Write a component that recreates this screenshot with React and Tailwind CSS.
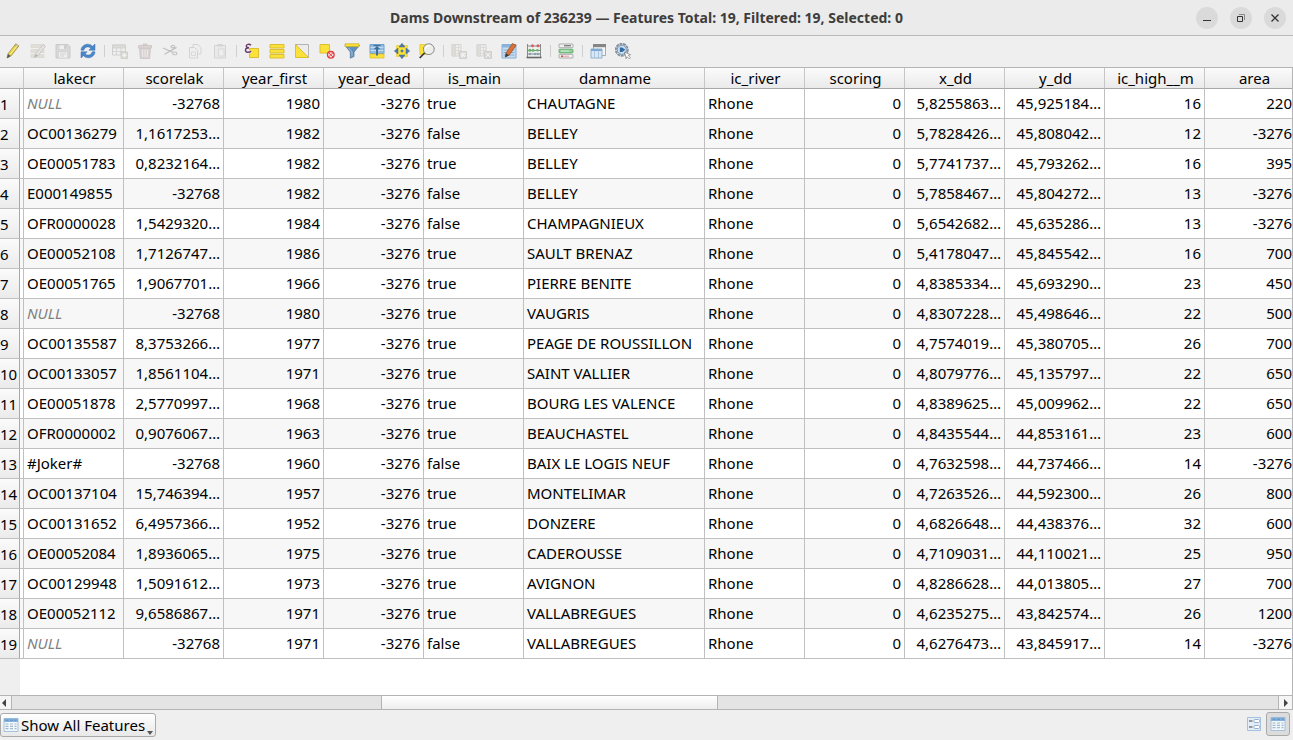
import React from 'react';

const COLUMNS = [
  { name: 'lakecr', align: 'left' },
  { name: 'scorelak', align: 'right' },
  { name: 'year_first', align: 'right' },
  { name: 'year_dead', align: 'right' },
  { name: 'is_main', align: 'left' },
  { name: 'damname', align: 'left', wide: true },
  { name: 'ic_river', align: 'left' },
  { name: 'scoring', align: 'right' },
  { name: 'x_dd', align: 'right' },
  { name: 'y_dd', align: 'right' },
  { name: 'ic_high__m', align: 'right' },
  { name: 'area', align: 'right', last: true },
];

const ROWS = [
  ['NULL', '-32768', '1980', 'true', 'CHAUTAGNE', '5,8255863…', '45,925184…', '16', '220'],
  ['OC00136279', '1,1617253…', '1982', 'false', 'BELLEY', '5,7828426…', '45,808042…', '12', '-3276'],
  ['OE00051783', '0,8232164…', '1982', 'true', 'BELLEY', '5,7741737…', '45,793262…', '16', '395'],
  ['E000149855', '-32768', '1982', 'false', 'BELLEY', '5,7858467…', '45,804272…', '13', '-3276'],
  ['OFR0000028', '1,5429320…', '1984', 'false', 'CHAMPAGNIEUX', '5,6542682…', '45,635286…', '13', '-3276'],
  ['OE00052108', '1,7126747…', '1986', 'true', 'SAULT BRENAZ', '5,4178047…', '45,845542…', '16', '700'],
  ['OE00051765', '1,9067701…', '1966', 'true', 'PIERRE BENITE', '4,8385334…', '45,693290…', '23', '450'],
  ['NULL', '-32768', '1980', 'true', 'VAUGRIS', '4,8307228…', '45,498646…', '22', '500'],
  ['OC00135587', '8,3753266…', '1977', 'true', 'PEAGE DE ROUSSILLON', '4,7574019…', '45,380705…', '26', '700'],
  ['OC00133057', '1,8561104…', '1971', 'true', 'SAINT VALLIER', '4,8079776…', '45,135797…', '22', '650'],
  ['OE00051878', '2,5770997…', '1968', 'true', 'BOURG LES VALENCE', '4,8389625…', '45,009962…', '22', '650'],
  ['OFR0000002', '0,9076067…', '1963', 'true', 'BEAUCHASTEL', '4,8435544…', '44,853161…', '23', '600'],
  ['#Joker#', '-32768', '1960', 'false', 'BAIX LE LOGIS NEUF', '4,7632598…', '44,737466…', '14', '-3276'],
  ['OC00137104', '15,746394…', '1957', 'true', 'MONTELIMAR', '4,7263526…', '44,592300…', '26', '800'],
  ['OC00131652', '6,4957366…', '1952', 'true', 'DONZERE', '4,6826648…', '44,438376…', '32', '600'],
  ['OE00052084', '1,8936065…', '1975', 'true', 'CADEROUSSE', '4,7109031…', '44,110021…', '25', '950'],
  ['OC00129948', '1,5091612…', '1973', 'true', 'AVIGNON', '4,8286628…', '44,013805…', '27', '700'],
  ['OE00052112', '9,6586867…', '1971', 'true', 'VALLABREGUES', '4,6235275…', '43,842574…', '26', '1200'],
  ['NULL', '-32768', '1971', 'false', 'VALLABREGUES', '4,6276473…', '43,845917…', '14', '-3276'],
].map(([lake, score, first, main, dam, x, y, high, area]) => [
  lake, score, first, '-3276', main, dam, 'Rhone', '0', x, y, high, area,
]);

function Icon({ children, dim }) {
  return (
    <svg viewBox="0 0 16 16" className={dim ? 'size-4 opacity-30 grayscale-50' : 'size-4'} fill="none" aria-hidden="true">
      {children}
    </svg>
  );
}

const pencil = (
  <>
    <path d="M2 15l1.2-4.6L10.6 1.2 13.6 3.2 6.3 12.6z" fill="#e8d24a" stroke="#8f8038" strokeWidth=".7" />
    <path d="M9.6 2.4l1.2-1.6 3 2-1.2 1.7z" fill="#cfc9a0" stroke="#8c8350" strokeWidth=".5" />
    <path d="M5 11.5L11.8 3" stroke="#fff29a" />
    <path d="M2 15.2l1-4.2 2.8 1.9z" fill="#555" />
  </>
);

const editMulti = (
  <>
    <path d="M1 1.5h13v3H1zM1 6.5h13v3H1zM1 11.5h13v3H1z" fill="#c5b98c" stroke="#a09570" strokeWidth=".6" />
    <path d="M4.5 14.5l1-3.5L13 1.5l2.4 1.8-7.2 9.2z" fill="#d3cbb4" stroke="#555" strokeWidth=".8" />
    <path d="M4.500 14.500l1-3.500 2.600 1.600z" fill="#333" />
  </>
);

const save = (
  <>
    <path d="M1 1.5h12l2 2V15H1z" fill="#a6a6a6" stroke="#777" />
    <path d="M4 2h8v4.5H4zM3.5 9h9v6h-9z" fill="#efefef" stroke="#888" strokeWidth=".6" />
    <path d="M9.5 2.5h1.6v3H9.5zM5 11h6M5 13h4" fill="#777" stroke="#777" strokeWidth=".8" />
  </>
);

const refresh = (
  <>
    <path d="M1 7.2C1.2 3.6 4.2 1.2 7.7 1.2c2 0 3.600.8 4.800 2L15 1v6.200H8.800l2-2C10 4.300 9 3.900 7.700 3.900c-2 0-3.400 1.300-3.900 3.300z" fill="#4a86c8" stroke="#3a72b4" strokeWidth=".5" />
    <path d="M15 8.800c-.2 3.600-3.200 6-6.700 6-2 0-3.600-.8-4.800-2L1 15V8.800h6.200l-2 2c.8.9 1.800 1.300 3.100 1.300 2 0 3.400-1.300 3.900-3.300z" fill="#4a86c8" stroke="#3a72b4" strokeWidth=".5" />
  </>
);

const addFeature = (
  <>
    <path d="M.5 2h13v10H.5z" fill="#eee" stroke="#888" />
    <path d="M.5 2h13v3H.5zM1 8.5h12" fill="#b8b090" stroke="#888" strokeWidth=".8" />
    <path d="M4.5 5v7M9 5v7" stroke="#888" strokeWidth=".8" />
    <path d="M9 9h6.5v6.5H9z" fill="#b7ae83" stroke="#716b50" strokeWidth=".7" />
    <path d="M12.2 10v4.5M10 12.2h4.5" stroke="#fff" strokeWidth="1.2" />
  </>
);

const trash = (
  <>
    <path d="M2.5 5h11l-.8 10.5H3.3z" fill="#bf8a8a" stroke="#925e5e" strokeWidth=".8" />
    <path d="M1.5 2.5h13V5h-13zM6 1h4v1.5H6z" fill="#c88f8f" stroke="#925e5e" strokeWidth=".8" />
    <path d="M5.5 6.5l.3 7.5M8 6.5V14M10.5 6.5l-.3 7.5" stroke="#f3e2e2" />
  </>
);

const scissors = (
  <>
    <path d="M1 5l9.5 4.2M2.5 11.2L14.5 4.4" stroke="#555" strokeWidth="1.3" />
    <ellipse cx="12.8" cy="10.4" rx="2.2" ry="1.4" stroke="#555" strokeWidth="1.1" />
    <ellipse cx="10.8" cy="3.6" rx="1.8" ry="1.3" stroke="#555" strokeWidth="1.1" />
  </>
);

const copy = (
  <>
    <path d="M6 1.5h5l3 3V11H6z" fill="#eee" stroke="#999" />
    <path d="M2.5 4.5h5l3 3V15h-8z" fill="#eee" stroke="#999" />
    <path d="M4.5 9h4v3.5h-4z" stroke="#aaa" />
  </>
);

const paste = (
  <>
    <path d="M2.5 2.5h11V15h-11z" fill="#ddd" stroke="#999" />
    <path d="M5.5 1h5v2.5h-5z" fill="#999" />
    <path d="M6.5 6H12v7H6.500z" fill="#eee" stroke="#999" strokeWidth=".8" />
  </>
);

const selectExpression = (
  <>
    <path d="M5.5 5.5h9v9h-9z" fill="#fbe23a" stroke="#dcbf30" />
    <path d="M7 2.2C5.4.8 2.3 1 2.3 3c0 1.200 1.200 1.700 2.800 1.700C3 4.700 1.500 5.500 1.500 7.200c0 2.500 4 2.700 5.700.8" stroke="#eee" strokeWidth="3" />
    <path d="M7 2.200C5.400.8 2.300 1 2.300 3c0 1.200 1.200 1.700 2.800 1.700C3 4.700 1.500 5.500 1.500 7.200c0 2.500 4 2.700 5.700.8" stroke="#6b3a6a" strokeWidth="1.400" />
  </>
);

const selectAll = (
  <path d="M1 1.500h14V5H1zM1 6.500h14V10H1zM1 11.500h14V15H1z" fill="#fbe23a" stroke="#dcbf30" />
);

const invert = (
  <>
    <path d="M1.500 1.500h13v13z" fill="#ececec" stroke="#b3b3b3" />
    <path d="M1.500 1.500l13 13h-13z" fill="#fbe23a" stroke="#dcbf30" />
  </>
);

const deselect = (
  <>
    <path d="M1 1.500h9.500V10H1z" fill="#fbe23a" stroke="#dcbf30" />
    <circle cx="11.800" cy="11.800" r="3.300" fill="#fbdede" stroke="#dc3b40" strokeWidth="1.300" />
    <path d="M9.600 9.600l4.400 4.400M14 9.600L9.600 14" stroke="#dc3b40" strokeWidth=".9" />
  </>
);

const filter = (
  <>
    <path d="M1 2.500L6.300 9v6.200l3.700-1.700V9l5.500-6.500z" fill="#6290bd" stroke="#4d7499" strokeWidth=".7" />
    <path d="M1 .8h14v2.800H1z" fill="#fbe23a" stroke="#c9ab22" strokeWidth=".7" />
    <path d="M4.500 5L8 9v4.500" stroke="#a3c3e1" />
  </>
);

const moveTop = (
  <>
    <path d="M1 1.500h14v9H1z" fill="#93bbdf" stroke="#6f9fcb" />
    <path d="M1.500 4.500h13M1.500 7.500h13" stroke="#d1e3f3" strokeWidth=".8" />
    <path d="M1 11h14v4H1z" fill="#fbe23a" stroke="#dcbf30" strokeWidth=".8" />
    <path d="M8 3l3.300 3.300H9v6.200H7V6.300H4.700z" fill="#3f6d9a" />
    <path d="M4.500 2.500h7" stroke="#3f6d9a" />
  </>
);

const pan = (
  <>
    <path d="M2.500 2.500h11v11h-11z" fill="#fbe23a" stroke="#e0c532" strokeWidth=".6" />
    <path d="M8 .3l3 3.700H5zM8 15.700L5 12h6zM.3 8L4 5v6zM15.700 8L12 11V5z" fill="#4f79a8" stroke="#42698f" strokeWidth=".5" />
    <path d="M8 6.200L9.800 8 8 9.800 6.200 8z" fill="#4f79a8" />
  </>
);

const zoomSel = (
  <>
    <path d="M.8 1.500H8v10H.8z" fill="#fbe23a" stroke="#dcbf30" strokeWidth=".6" />
    <path d="M6 9.500L.7 15" stroke="#3a382e" strokeWidth="1.800" />
    <circle cx="9.800" cy="6.200" r="5.400" fill="#eeeeea" stroke="#888" />
    <path d="M6.500 5.500C7 3.300 9 2.200 11 2.700" stroke="#fff" strokeWidth="1.400" />
  </>
);

function columnIcon(remove) {
  return (
    <>
      <path d="M1 1.500h9V13H1z" fill="#eee" stroke="#999" />
      <path d="M1 1.500h3.500V13H1z" fill="#bdb384" stroke="#999" strokeWidth=".8" />
      <path d="M5 4.500h5M5 7.500h5M5 10.500h4M7.500 1.500V13" stroke="#999" strokeWidth=".7" />
      <path d="M8.500 8.500h7v7h-7z" fill={remove ? '#c4a0a0' : '#b7ae83'} stroke="#786d5a" strokeWidth=".7" />
      <path d={remove ? 'M10 10l4 4M14 10l-4 4' : 'M12 9.500v5M9.500 12h5M10 10l4 4M14 10l-4 4'} stroke="#fff" />
    </>
  );
}

const multiEdit = (
  <>
    <path d="M1 1.500h14v13.500H1z" fill="#c7ddf1" stroke="#85aed6" />
    <path d="M1 1.500h14V4.500H1z" fill="#8ab3dc" />
    <path d="M2.500 7h11M2.500 9.500h11M2.500 12h11" stroke="#85aed2" />
    <path d="M4.200 14l.8-4L11.500.5 15 2.500 8.300 12z" fill="#dc7137" stroke="#8c4a25" strokeWidth=".7" />
    <path d="M4.200 14.200L5 10.300l3 1.900z" fill="#3b3b3b" />
  </>
);

const abacus = (
  <>
    <path d="M1.500 1v13M14.500 1v13M2 3h12M2 7.500h12M2 11h12" stroke="#888" />
    <path d="M.5 14.500h15" stroke="#666" strokeWidth="1.600" />
    <g fill="#e05c5c"><circle cx="6.500" cy="2.800" r="1.500" /><circle cx="12" cy="2.800" r="1.500" /></g>
    <g fill="#68b36b"><circle cx="3.800" cy="7.200" r="1.500" /><circle cx="7" cy="7.200" r="1.500" /><circle cx="11.500" cy="7.200" r="1.300" /></g>
    <g fill="#87a3b5"><circle cx="4" cy="11" r="1.300" /><circle cx="9" cy="11" r="1.300" /><circle cx="12" cy="11" r="1.300" /></g>
  </>
);

const conditional = (
  <>
    <rect x="1" y="1" width="14" height="3.700" rx=".8" fill="#f2f2f2" stroke="#999" strokeWidth=".8" />
    <rect x="1" y="6.200" width="14" height="3.700" rx=".8" fill="#8fd396" stroke="#55a266" strokeWidth=".8" />
    <rect x="1" y="11.300" width="14" height="3.700" rx=".8" fill="#f2f2f2" stroke="#999" strokeWidth=".8" />
    <path d="M6 2.800h7" stroke="#555" />
    <path d="M3 8h8" stroke="#d3f0d6" />
    <path d="M3 13.200h2" stroke="#d34c4c" strokeWidth="1.400" />
    <path d="M5 13.200h6" stroke="#e2a0a0" />
  </>
);

const dock = (
  <>
    <path d="M3.500 1.500h12v11h-12z" fill="#f5f5f5" stroke="#aaa" />
    <path d="M3 1h13v3.200H3z" fill="#858585" />
    <path d="M1 6h11v9H1z" fill="#d7e7f5" stroke="#8fb0cf" />
    <path d="M1 6h11v2H1z" fill="#7da9d2" />
    <path d="M4.500 8v7M8.500 8v7" stroke="#9fbdd8" strokeWidth=".8" />
  </>
);

const action = (
  <>
    <circle cx="6.800" cy="6.800" r="6" stroke="#858f98" strokeWidth="1.800" strokeDasharray="2.900 .7" />
    <circle cx="6.800" cy="6.800" r="4.600" fill="#cfdfed" stroke="#6f93b5" />
    <path d="M4.800 4.500h2.500l3 2.300-3 2.300H4.800z" fill="#2f6ca5" />
    <path d="M9.500 9l6 2.700-2.200.8 2.200 2.200-1.200 1.200-2.200-2.200-.9 2z" fill="#fff" stroke="#777" strokeWidth=".7" />
  </>
);

const tableIcon = (
  <>
    <path d="M1 1.500h14v13H1z" fill="#f1f6fb" stroke="#a5c1dc" />
    <path d="M1 1.500h14V5H1z" fill="#86b2dc" />
    <path d="M2.500 3.200h3M7 3.200h3M11.500 3.200h2" stroke="#5f90be" />
    <path d="M2.500 7h3M7 7h3M11.500 7h2M2.500 9.300h3M7 9.300h3M11.500 9.300h2M2.500 11.600h3M7 11.600h3M11.500 11.600h2" stroke="#a3b9cd" strokeWidth="1.200" />
  </>
);

const formIcon = (
  <>
    <path d="M1.500 1.500h13v13h-13z" fill="#e4edf6" stroke="#a5c1dc" />
    <path d="M3 5h3.500M3 11h3.500" stroke="#444" strokeWidth="1.200" />
    <rect x="8" y="3.500" width="5.500" height="3" rx="1" fill="#fff" stroke="#8fb3d6" />
    <rect x="8" y="9.500" width="5.500" height="3" rx="1" fill="#fff" stroke="#8fb3d6" />
  </>
);

const TOOL_GROUPS = [
  [
    ['Toggle editing mode', pencil],
    ['Toggle multi edit mode', editMulti, true],
    ['Save edits', save, true],
    ['Reload the table', refresh],
  ],
  [
    ['Add feature', addFeature, true],
    ['Delete selected features', trash, true],
    ['Cut', scissors, true],
    ['Copy', copy, true],
    ['Paste', paste, true],
  ],
  [
    ['Select features using an expression', selectExpression],
    ['Select all', selectAll],
    ['Invert selection', invert],
    ['Deselect all', deselect],
    ['Filter features', filter],
    ['Move selection to top', moveTop],
    ['Pan map to selected rows', pan],
    ['Zoom map to selected rows', zoomSel],
  ],
  [
    ['New field', columnIcon(false), true],
    ['Delete field', columnIcon(true), true],
    ['Organize columns', multiEdit],
    ['Field calculator', abacus],
  ],
  [['Conditional formatting', conditional]],
  [
    ['Dock attribute table', dock],
    ['Actions', action],
  ],
];

function TitleBar() {
  return (
    <header className="grid h-9 shrink-0 grid-cols-[1fr_auto_1fr] items-center border-b border-[#b9b9b9] bg-[#ebebeb]">
      <h1 className="col-start-2 text-[14px] leading-5 font-bold text-[#3d3d3d]">
        Dams Downstream of 236239 — Features Total: 19, Filtered: 19, Selected: 0
      </h1>
      <div className="flex justify-end gap-3 pr-[7px]">
        <button aria-label="Minimize" className="flex size-[22px] items-center justify-center rounded-full bg-[#dadada]">
          <svg viewBox="0 0 10 10" className="size-2.5" aria-hidden="true"><path d="M1 7.500h8" stroke="#333" /></svg>
        </button>
        <button aria-label="Restore" className="flex size-[22px] items-center justify-center rounded-full bg-[#dadada]">
          <svg viewBox="0 0 10 10" className="size-2.5" fill="none" aria-hidden="true">
            <path d="M3 1.500h5.500V7" stroke="#888" />
            <path d="M1.500 3.500h5v5h-5z" stroke="#333" />
          </svg>
        </button>
        <button aria-label="Close" className="flex size-[22px] items-center justify-center rounded-full bg-[#dadada]">
          <svg viewBox="0 0 10 10" className="size-2.5" aria-hidden="true"><path d="M1.500 1.500l7 7M8.500 1.500l-7 7" stroke="#333" strokeWidth="1.300" /></svg>
        </button>
      </div>
    </header>
  );
}

function Toolbar() {
  return (
    <div role="toolbar" aria-label="Attribute table" className="flex h-8 shrink-0 items-center border-b border-[#b4b4b4] pb-px">
      {TOOL_GROUPS.map((group, g) => (
        <React.Fragment key={g}>
          {g > 0 && <span className="ml-1 h-3 w-[3px] border-l border-[#cfcfcf]" />}
          {group.map(([label, drawing, dim]) => (
            <button key={label} aria-label={label} title={label} disabled={dim} className="flex h-6 w-[25px] items-center justify-center">
              <Icon dim={dim}>{drawing}</Icon>
            </button>
          ))}
        </React.Fragment>
      ))}
    </div>
  );
}

function cellClass(column, value) {
  const base = 'h-[30px] overflow-hidden border-b border-[#c0c0c0] pt-0 pb-0.5 whitespace-nowrap';
  const side = column.last ? 'text-right' : column.align === 'right' ? 'border-r px-[3px] text-right' : 'border-r px-[3px] text-left';
  return `${base} ${side} ${value === 'NULL' ? 'text-[#808080] italic' : ''}`;
}

function AttributeTable() {
  return (
    <table className="w-full table-fixed border-separate border-spacing-0 text-[15px] leading-5">
      <colgroup>
        <col className="w-5" />
        <col className="w-1" />
        {COLUMNS.map((c) => (
          <col key={c.name} className={c.last ? '' : c.wide ? 'w-[181px]' : 'w-[100px]'} />
        ))}
      </colgroup>
      <thead>
        <tr className="bg-linear-to-b from-[#fbfbfb] to-[#e9e9e9]">
          <td colSpan={2} className="border-r border-b border-r-[#c6c6c6] border-b-[#a8a8a8]" />
          {COLUMNS.map((c) => (
            <th
              key={c.name}
              scope="col"
              className={`h-[21px] border-b border-b-[#a8a8a8] py-0 pr-0 font-normal ${c.last ? 'pl-3' : 'border-r border-r-[#c6c6c6] pl-0.5'}`}
            >
              {c.name}
            </th>
          ))}
        </tr>
      </thead>
      <tbody>
        {ROWS.map((row, i) => (
          <tr key={i} className="bg-white even:bg-[#f7f7f7]">
            <th scope="row" className="border-r border-b border-r-[#a8a8a8] border-b-[#c0c0c0] bg-linear-to-b from-[#fbfbfb] to-[#ebebeb] p-0 text-left font-normal">
              {i + 1}
            </th>
            <td className="border-r border-b border-[#c0c0c0] p-0" />
            {row.map((value, j) => (
              <td key={COLUMNS[j].name} className={cellClass(COLUMNS[j], value)}>{value}</td>
            ))}
          </tr>
        ))}
      </tbody>
    </table>
  );
}

function HorizontalScroll() {
  return (
    <div className="flex h-[15px] shrink-0 border-y border-[#b4b4b4] bg-[#e4e4e4]">
      <button aria-label="Scroll left" className="flex w-3 items-center justify-center border-r border-[#b4b4b4] bg-[#f5f5f5] pr-1">
        <svg viewBox="0 0 6 8" className="h-2 w-1.5" aria-hidden="true"><path d="M5 0v8L1 4z" fill="#444" /></svg>
      </button>
      <div className="flex-[369]" />
      <div className="flex-[336] border-x border-[#b4b4b4] bg-linear-to-b from-white to-[#eeeeee]" />
      <div className="flex-[560]" />
      <button aria-label="Scroll right" className="flex w-[14px] items-center justify-center border-l border-[#b4b4b4] bg-[#f5f5f5]">
        <svg viewBox="0 0 6 8" className="h-2 w-1.5" aria-hidden="true"><path d="M1 0v8l4-4z" fill="#444" /></svg>
      </button>
    </div>
  );
}

function BottomBar() {
  return (
    <footer className="flex h-[30px] shrink-0 items-center justify-between pr-[3px]">
      <button className="flex h-6 items-center gap-0.5 rounded-[3px] border border-[#a9a9a9] bg-linear-to-b from-white to-[#e8e8e8] px-0.5 text-[15px] leading-5">
        <Icon>{tableIcon}</Icon>
        Show All Features
        <svg viewBox="0 0 6 4" className="mb-px h-1 w-1.5 self-end" aria-hidden="true"><path d="M0 0h6L3 4z" fill="#555" /></svg>
      </button>
      <div className="flex items-center pb-0.5">
        <button aria-label="Switch to form view" className="flex size-6 items-center justify-center">
          <Icon>{formIcon}</Icon>
        </button>
        <button aria-label="Switch to table view" aria-pressed="true" className="flex size-6 items-center justify-center rounded-[3px] border border-[#a9a9a9] bg-[#dcdcdc]">
          <Icon>{tableIcon}</Icon>
        </button>
      </div>
    </footer>
  );
}

export default function App() {
  return (
    <div className="flex min-h-screen flex-col overflow-hidden bg-[#efefef] font-['Noto_Sans','Open_Sans',sans-serif] text-black">
      <TitleBar />
      <Toolbar />
      <main className="flex grow flex-col border-r border-[#b4b4b4]">
        <AttributeTable />
        <div className="flex grow">
          <div className="w-5" />
          <div className="grow bg-white" />
        </div>
        <HorizontalScroll />
      </main>
      <BottomBar />
    </div>
  );
}
